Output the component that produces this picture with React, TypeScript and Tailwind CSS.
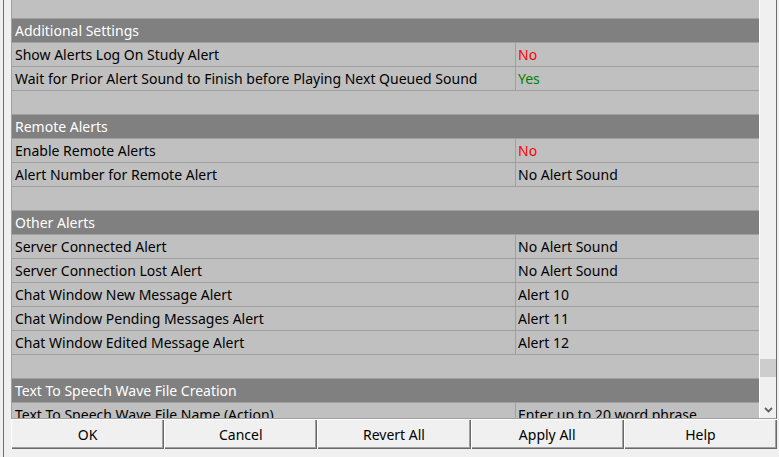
import React from "react";

type Row =
  | { kind: "blank"; h?: string }
  | { kind: "header"; label: string }
  | { kind: "item"; label: string; value: string; tone?: "red" | "green" };

const rows: Row[] = [
  { kind: "blank", h: "h-[19px]" },
  { kind: "header", label: "Additional Settings" },
  { kind: "item", label: "Show Alerts Log On Study Alert", value: "No", tone: "red" },
  { kind: "item", label: "Wait for Prior Alert Sound to Finish before Playing Next Queued Sound", value: "Yes", tone: "green" },
  { kind: "blank" },
  { kind: "header", label: "Remote Alerts" },
  { kind: "item", label: "Enable Remote Alerts", value: "No", tone: "red" },
  { kind: "item", label: "Alert Number for Remote Alert", value: "No Alert Sound" },
  { kind: "blank" },
  { kind: "header", label: "Other Alerts" },
  { kind: "item", label: "Server Connected Alert", value: "No Alert Sound" },
  { kind: "item", label: "Server Connection Lost Alert", value: "No Alert Sound" },
  { kind: "item", label: "Chat Window New Message Alert", value: "Alert 10" },
  { kind: "item", label: "Chat Window Pending Messages Alert", value: "Alert 11" },
  { kind: "item", label: "Chat Window Edited Message Alert", value: "Alert 12" },
  { kind: "blank" },
  { kind: "header", label: "Text To Speech Wave File Creation" },
  { kind: "item", label: "Text To Speech Wave File Name (Action)", value: "Enter up to 20 word phrase" },
];

const buttons = ["OK", "Cancel", "Revert All", "Apply All", "Help"];

function GridRow({ row }: { row: Row }) {
  if (row.kind === "blank") {
    return <div className={`${row.h ?? "h-[24px]"} shrink-0 border-b border-[#a0a0a0] bg-[#c0c0c0]`} />;
  }
  if (row.kind === "header") {
    return (
      <div className="h-[24px] shrink-0 border-b border-[#a0a0a0] bg-[#808080] flex items-center pl-[3px] text-white">
        {row.label}
      </div>
    );
  }
  const toneClass =
    row.tone === "red" ? "text-[#ff0000]" : row.tone === "green" ? "text-[#008000]" : "text-black";
  return (
    <div className="h-[24px] shrink-0 border-b border-[#a0a0a0] bg-[#c0c0c0] flex text-black">
      <div className="w-[504px] shrink-0 border-r border-[#a0a0a0] flex items-center pl-[3px] whitespace-nowrap overflow-hidden">
        {row.label}
      </div>
      <div className={`flex-1 flex items-center pl-[2px] whitespace-nowrap overflow-hidden ${toneClass}`}>
        {row.value}
      </div>
    </div>
  );
}

export default function App() {
  return (
    <div
      className="w-[779px] h-[457px] bg-[#f0f0f0] overflow-hidden pl-[3px] text-[14px]"
      style={{ fontFamily: '"Noto Sans", "Open Sans", sans-serif' }}
    >
      <div className="h-full border-l border-[#6e6e6e] pl-[7px] pr-[2px]">
        <div className="flex flex-col h-[449px]">
          {/* property grid + scrollbar */}
          <div className="h-[419px] flex border-b border-[#a0a0a0] border-r border-r-[#6e6e6e]">
            <div className="flex-1 flex flex-col overflow-hidden border-l border-[#a0a0a0] border-r border-r-white leading-none">
              {rows.map((r, i) => (
                <GridRow key={i} row={r} />
              ))}
            </div>
            <div className="w-[16px] shrink-0 bg-[#f0f0f0] flex flex-col">
              <div className="flex-1" />
              <div className="h-[18px] mb-[24px] bg-[#cdcdcd] mx-[0px]" />
              <div className="h-[17px] flex items-center justify-center">
                <svg width="9" height="6" viewBox="0 0 9 6">
                  <path d="M1 1 L4.5 4.5 L8 1" fill="none" stroke="#606060" strokeWidth="1.8" />
                </svg>
              </div>
            </div>
          </div>
          {/* buttons */}
          <div className="grid grid-cols-5 h-[30px]">
            {buttons.map((b) => (
              <button
                key={b}
                className="bg-[#f0f0f0] text-black shadow-[inset_1px_1px_#ffffff,inset_-1px_-1px_#696969,inset_-2px_-2px_#a0a0a0] flex items-center justify-center"
              >
                {b}
              </button>
            ))}
          </div>
        </div>
      </div>
    </div>
  );
}
